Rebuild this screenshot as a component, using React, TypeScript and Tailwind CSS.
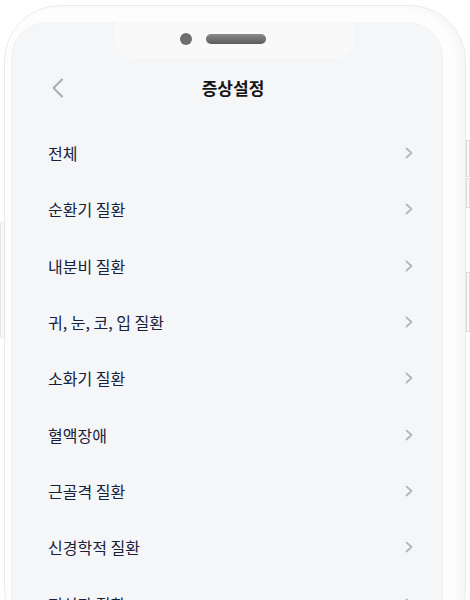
const categories = [
  "전체",
  "순환기 질환",
  "내분비 질환",
  "귀, 눈, 코, 입 질환",
  "소화기 질환",
  "혈액장애",
  "근골격 질환",
  "신경학적 질환",
  "정신과 질환",
];

function RowChevron() {
  return (
    <svg width="10" height="12" viewBox="0 0 10 12" fill="none">
      <polyline
        points="2.5,1.5 7.5,6 2.5,10.5"
        stroke="#b4b6ba"
        strokeWidth="1.8"
        strokeLinecap="round"
        strokeLinejoin="round"
      />
    </svg>
  );
}

function BackChevron() {
  return (
    <svg width="14" height="20" viewBox="0 0 14 20" fill="none">
      <polyline
        points="11,1.5 2.5,10 11,18.5"
        stroke="#a3aab8"
        strokeWidth="2"
        strokeLinecap="round"
        strokeLinejoin="round"
      />
    </svg>
  );
}

function SymptomRow({ label }: { label: string }) {
  return (
    <div className="flex h-[56.3px] items-center justify-between pl-[37px] pr-[29px]">
      <span className="text-[16px] text-[#17213b]">{label}</span>
      <RowChevron />
    </div>
  );
}

export default function App() {
  return (
    <div
      className="relative h-[600px] w-[470px] overflow-hidden bg-white"
      style={{ fontFamily: '"Noto Sans CJK KR", "Noto Sans", sans-serif' }}
    >
      {/* side buttons */}
      <div className="absolute left-0 top-[222px] h-[116px] w-[5px] rounded-l-[2px] border border-[#e4e4e4] bg-[#fafafa]" />
      <div className="absolute right-0 top-[140px] h-[37px] w-[4px] border border-[#dcdcdc] bg-[#fafafa]" />
      <div className="absolute right-0 top-[178px] h-[30px] w-[4px] border border-[#dcdcdc] bg-[#fafafa]" />
      <div className="absolute right-0 top-[272px] h-[60px] w-[4px] border border-[#dcdcdc] bg-[#fafafa]" />

      {/* phone frame */}
      <div className="ml-[4px] mt-[5px] h-[640px] w-[462px] rounded-[56px] border border-[#ececec] bg-[#fdfdfd] pl-[6px] pr-[22px] pt-[16px] shadow-[inset_-6px_0_8px_rgba(0,0,0,0.03)]">
        <div className="h-[620px] rounded-[36px] bg-[#f5f6f8] shadow-[inset_0_0_3px_rgba(0,0,0,0.04)]">
          {/* notch */}
          <div className="ml-[104px] flex h-[36px] w-[239px] items-center gap-[14px] rounded-b-[18px] bg-[#f9f9f9] pb-[2px] pl-[65px]">
            <div className="h-[12px] w-[12px] rounded-full bg-[#6e6e6e]" />
            <div className="h-[10px] w-[60px] rounded-full bg-gradient-to-b from-[#8a8a8a] to-[#5d5d5d]" />
          </div>

          <div className="grid h-[60px] grid-cols-[80px_1fr_80px] items-center">
            <div className="flex pl-[40px]">
              <BackChevron />
            </div>
            <span className="pl-[12px] text-center text-[17px] font-bold text-[#151515]">증상설정</span>
            <div />
          </div>

          <div className="pt-[7px]">
            {categories.map((c) => (
              <SymptomRow key={c} label={c} />
            ))}
          </div>
        </div>
      </div>
    </div>
  );
}
